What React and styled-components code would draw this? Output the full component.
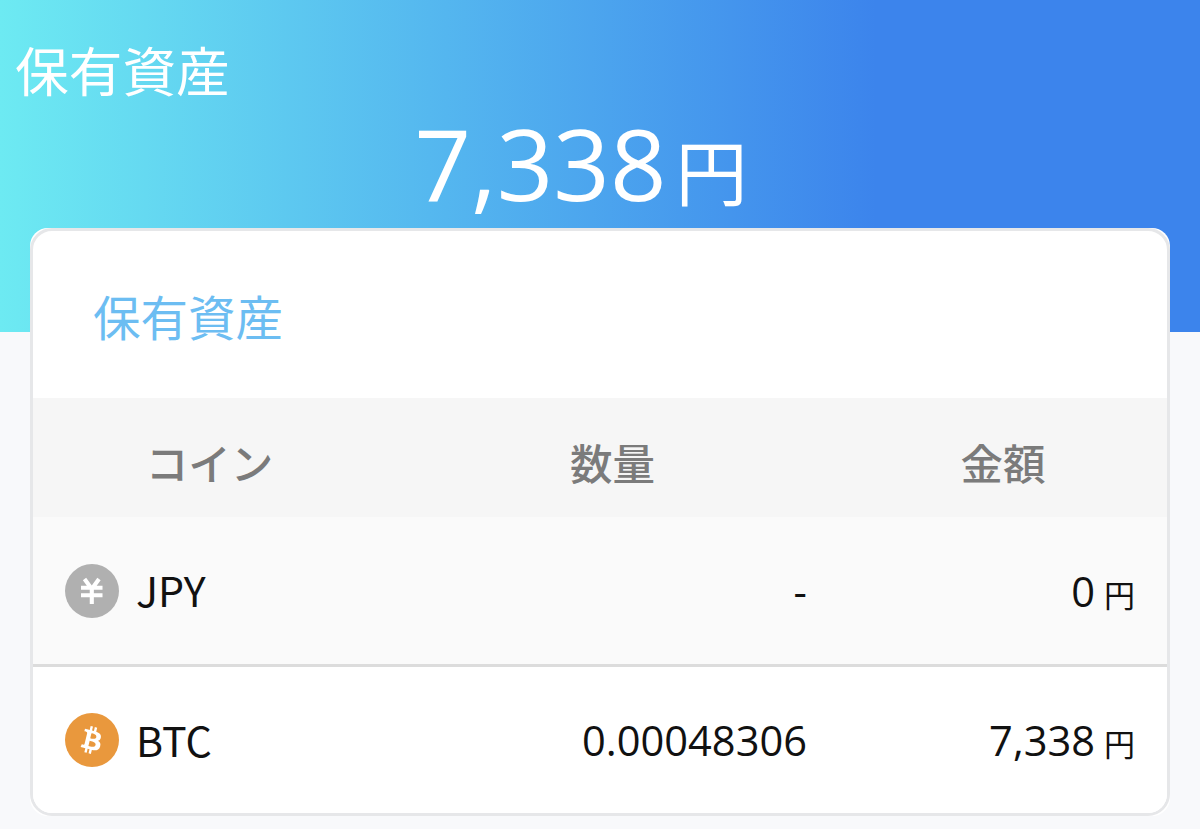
import React from 'react';
import styled, { createGlobalStyle } from 'styled-components';

const GlobalStyle = createGlobalStyle`
  * {
    box-sizing: border-box;
  }

  body {
    margin: 0;
    background: #f8f9fb;
    font-family: 'Open Sans', 'Noto Sans CJK JP', sans-serif;
    color: #111;
  }
`;

const holdings = [
  { code: 'JPY', amount: '-', value: '0' },
  { code: 'BTC', amount: '0.00048306', value: '7,338' },
];

const CoinIcon = ({ code }) => (
  <svg width="54" height="54" viewBox="0 0 54 54">
    <circle cx="27" cy="27" r="27" fill={code === 'BTC' ? '#e9983d' : '#b0b0b0'} />
    {code === 'BTC' ? (
      <path
        transform="translate(4.6 4.6) scale(1.35 1.4)"
        fill="#fff"
        d="M23.189 14.02c.314-2.096-1.283-3.223-3.465-3.975l.708-2.84-1.728-.43-.69 2.765c-.454-.114-.92-.22-1.385-.326l.695-2.783L15.596 6l-.708 2.839c-.376-.086-.746-.17-1.104-.26l.002-.009-2.384-.595-.46 1.846s1.283.294 1.256.312c.7.175.826.638.805 1.006l-.806 3.235c.048.012.11.03.18.057l-.183-.045-1.13 4.532c-.086.212-.303.531-.793.41.018.025-1.256-.313-1.256-.313l-.858 1.978 2.25.561c.418.105.828.215 1.231.318l-.715 2.872 1.727.43.708-2.84c.472.127.93.245 1.378.357l-.706 2.828 1.728.43.715-2.866c2.948.558 5.164.333 6.097-2.333.752-2.146-.037-3.385-1.588-4.192 1.13-.26 1.98-1.003 2.207-2.538zm-3.95 5.538c-.533 2.147-4.148.986-5.32.695l.95-3.805c1.172.293 4.929.872 4.37 3.11zm.535-5.569c-.487 1.953-3.495.96-4.47.717l.86-3.45c.975.243 4.118.696 3.61 2.733z"
      />
    ) : (
      <path
        d="M19.5 15 26.8 25 34 15M26.8 24v16M16 23.7h21.5M16 31.2h21.5"
        fill="none"
        stroke="#fff"
        strokeWidth="4.1"
      />
    )}
  </svg>
);

const App = () => (
  <>
    <GlobalStyle />
    <Page>
      <Hero>
        <HeroTitle>保有資産</HeroTitle>
        <Total>
          <span>7,338</span>
          <TotalUnit>円</TotalUnit>
        </Total>
      </Hero>
      <CardShell>
        <Card>
          <CardTitle>保有資産</CardTitle>
          <HeadRow>
            <span>コイン</span>
            <span>数量</span>
            <span>金額</span>
          </HeadRow>
          {holdings.map(({ code, amount, value }, i) => (
            <Row key={code} $shaded={i % 2 === 0}>
              <Coin>
                <CoinIcon code={code} />
                <CoinName>{code}</CoinName>
              </Coin>
              <Cell>{amount}</Cell>
              <Cell>
                {value}
                <Unit>円</Unit>
              </Cell>
            </Row>
          ))}
        </Card>
      </CardShell>
    </Page>
  </>
);

const Page = styled.div`
  height: 829px;
  overflow: hidden;
`;

const Hero = styled.header`
  height: 332px;
  padding: 38px 15px 0;
  color: #fff;
  background: linear-gradient(90deg, #6deaf2 0%, #3c84ec 73%);
`;

const HeroTitle = styled.h1`
  margin: 0;
  font-size: 53.7px;
  font-weight: 400;
  line-height: 67px;
`;

const Total = styled.div`
  display: flex;
  justify-content: center;
  height: 124px;
  padding-right: 38px;
  font-size: 99px;
  line-height: 116px;
`;

const TotalUnit = styled.span`
  margin-left: 9px;
  font-size: 72px;
  line-height: 135px;
`;

/* white backing keeps a thin white rim outside the rounded border */
const CardShell = styled.div`
  margin: -104px 30px 0;
  border-radius: 18px;
  background: #fff;
`;

const Card = styled.section`
  height: 588px;
  border: 3px solid #e6e7e9;
  border-radius: 22px;
  background: #fff;
  overflow: hidden;
`;

const CardTitle = styled.h2`
  height: 167px;
  margin: 0;
  padding: 0 60px;
  color: #6cbdf2;
  font-size: 47.5px;
  font-weight: 400;
  line-height: 174px;
`;

const HeadRow = styled.div`
  display: grid;
  grid-template-columns: 353px 453px 1fr;
  height: 119px;
  background: #f6f6f6;
  color: #7b7b7b;
  font-size: 42.5px;
  font-weight: 500;
  line-height: 131px;
  text-align: center;
`;

const Row = styled.div`
  display: grid;
  grid-template-columns: 355px 387px 1fr;
  align-items: center;
  height: ${(props) => (props.$shaded ? '150px' : '146px')};
  padding: 0 32px;
  border-bottom: ${(props) => (props.$shaded ? '3px solid #dcdcdc' : 'none')};
  background: ${(props) => (props.$shaded ? '#fafafa' : '#fff')};
  font-size: 41.6px;
`;

const Coin = styled.div`
  display: flex;
  align-items: center;
  gap: 17px;
`;

const CoinName = styled.span`
  padding-bottom: 3px;
  font-family: 'Noto Sans CJK JP', sans-serif;
  font-size: 41.2px;
`;

const Cell = styled.div`
  text-align: right;
`;

const Unit = styled.span`
  margin-left: 9px;
  font-size: 31px;
`;

export default App;
